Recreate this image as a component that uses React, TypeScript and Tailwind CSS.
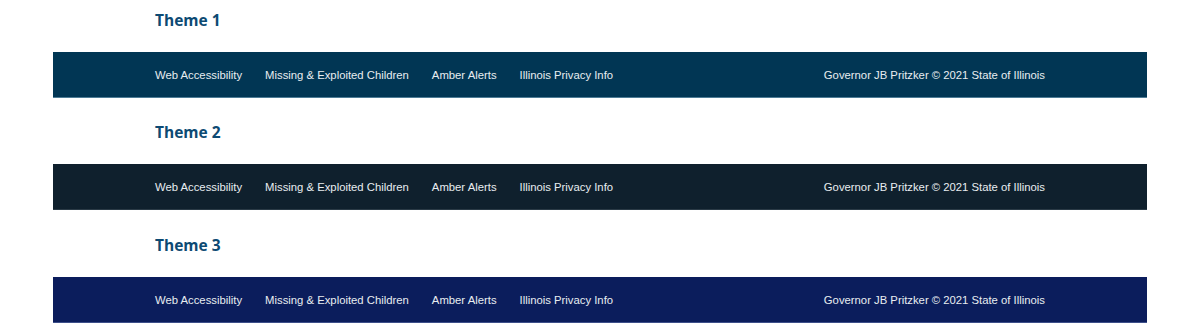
import React from "react";

const links = ["Web Accessibility", "Missing & Exploited Children", "Amber Alerts", "Illinois Privacy Info"];

function Footer({ bg, border }: { bg: string; border: string }) {
  return (
    <div className={`${bg} ${border} border-b h-[46px] flex items-center pt-[2px]`}>
      <div className="w-[890px] mx-auto flex items-center justify-between text-[11.3px] text-[#e8edf0] font-['Liberation_Sans',Arial,sans-serif]">
        <div className="flex items-center gap-[23px]">
          {links.map((l) => (
            <span key={l}>{l}</span>
          ))}
        </div>
        <span>Governor JB Pritzker © 2021 State of Illinois</span>
      </div>
    </div>
  );
}

function Section({ title, bg, border, pt }: { title: string; bg: string; border: string; pt: string }) {
  return (
    <div className={pt}>
      <div className="w-[890px] mx-auto">
        <h2 className="text-[15.5px] leading-[24px] font-bold text-[#0d4a73] font-['Open_Sans','Noto_Sans',sans-serif]">{title}</h2>
      </div>
      <div className="mt-[20px] mx-[53px]">
        <Footer bg={bg} border={border} />
      </div>
    </div>
  );
}

export default function App() {
  return (
    <div className="w-[1200px] h-[323px] bg-white overflow-hidden">
      <Section title="Theme 1" bg="bg-[#013654]" border="border-[#4d7c96]" pt="pt-[8px]" />
      <Section title="Theme 2" bg="bg-[#0f202d]" border="border-[#2a3a46]" pt="pt-[22px]" />
      <Section title="Theme 3" bg="bg-[#0b1d5c]" border="border-[#3d4f8a]" pt="pt-[23px]" />
    </div>
  );
}
